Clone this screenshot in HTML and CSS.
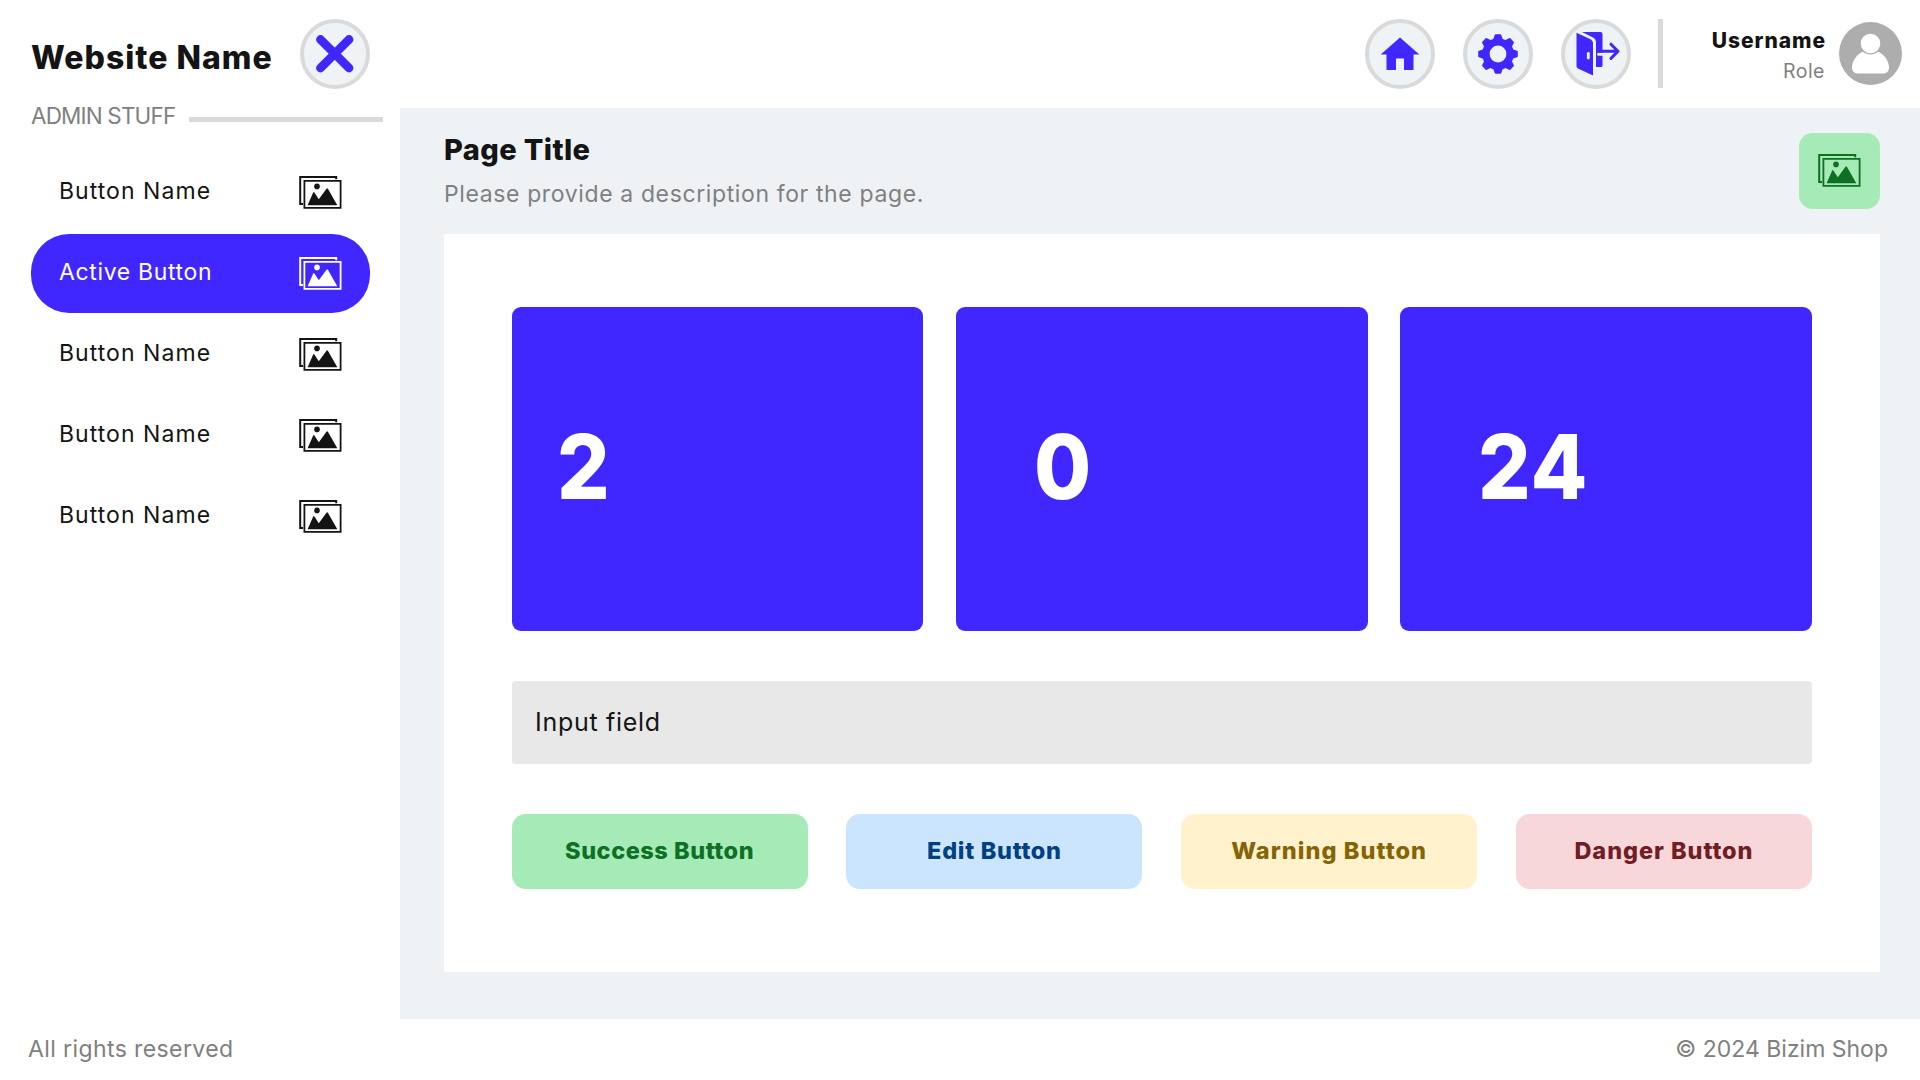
FILE: index.html
```html
<!DOCTYPE html>
<html lang="en">
<head>
<meta charset="utf-8">
<title>Admin panel</title>
<link rel="stylesheet" href="styles.css">
</head>
<body>
<svg class="sprite" aria-hidden="true">
  <symbol id="icon-image" viewBox="0 0 44 35">
    <path d="M38.2 4.3V2H2.2v27.1H5" fill="none" stroke="currentColor" stroke-width="2"/>
    <path d="M6.4 5.9h36.2v27H6.4z" fill="none" stroke="currentColor" stroke-width="1.8"/>
    <circle cx="19" cy="11.4" r="2.8" fill="currentColor"/>
    <path d="M9.6 30.2 15.2 17.5Q15.8 16.6 16.4 17.5L20.8 24.3 28.5 13.7Q29.2 12.9 29.9 13.8L39.3 30.2Z" fill="currentColor"/>
  </symbol>
</svg>
<div class="app">
  <aside class="sidebar">
    <div class="brand">
      <h1 class="brand-name">Website Name</h1>
      <button class="circle" aria-label="Close menu">
        <svg class="glyph" viewBox="0 0 70 70"><path d="M20.500 20.500 49 49M49 20.500 20.500 49" fill="none" stroke="currentColor" stroke-width="8.800" stroke-linecap="round"/></svg>
      </button>
    </div>
    <div class="section"><span class="section-label">ADMIN STUFF</span><span class="section-rule"></span></div>
    <nav class="nav">
      <a class="nav-item"><span class="nav-label">Button Name</span><svg class="image-icon"><use href="#icon-image"/></svg></a>
      <a class="nav-item active"><span class="nav-label">Active Button</span><svg class="image-icon"><use href="#icon-image"/></svg></a>
      <a class="nav-item"><span class="nav-label">Button Name</span><svg class="image-icon"><use href="#icon-image"/></svg></a>
      <a class="nav-item"><span class="nav-label">Button Name</span><svg class="image-icon"><use href="#icon-image"/></svg></a>
      <a class="nav-item"><span class="nav-label">Button Name</span><svg class="image-icon"><use href="#icon-image"/></svg></a>
    </nav>
  </aside>
  <div class="column">
    <header class="topbar">
      <div class="actions">
        <button class="circle" aria-label="Home">
          <svg class="glyph" viewBox="0 0 70 70"><path d="M35 18.5 54.3 35.6H48.5V51H39V39.5H31V51H21.5V35.6H15.7Z" fill="currentColor"/></svg>
        </button>
        <button class="circle" aria-label="Settings">
          <svg class="glyph" viewBox="-35 -35 70 70" fill="currentColor">
            <circle r="12.1" fill="none" stroke="currentColor" stroke-width="7.4"/>
            <g id="teeth"><path id="tooth" d="M-5-14-3.3-19Q-3.1-19.8-2.3-19.8H2.3Q3.1-19.8 3.3-19L5-14Z"/><use href="#tooth" transform="rotate(45)"/><use href="#tooth" transform="rotate(90)"/><use href="#tooth" transform="rotate(135)"/></g>
            <use href="#teeth" transform="rotate(180)"/>
          </svg>
        </button>
        <button class="circle" aria-label="Log out">
          <svg class="glyph" viewBox="0 0 70 70">
            <path d="M21 13H39.500Q41.500 13 41.500 15V46.500Q41.500 48 40 48H35V23.500Q35 20 32 18.500Z" fill="currentColor"/>
            <path d="M15.500 13.700 29 20Q32 21.500 32 24.500V56.500L17 49.500Q15.500 48.700 15.500 47Z" fill="currentColor"/>
            <path d="M27.300 34.300V39" class="cut" stroke-width="2.800"/>
            <path d="M37.500 35.200H42" class="cut" stroke-width="3"/>
            <path d="M38.500 32.300H56M50 25.200 57 32.300 50 39.400" fill="none" stroke="currentColor" stroke-width="3" stroke-linecap="round" stroke-linejoin="round"/>
          </svg>
        </button>
      </div>
      <span class="divider"></span>
      <div class="user">
        <div class="user-text"><span class="user-name">Username</span><span class="user-role">Role</span></div>
        <svg class="avatar" viewBox="0 0 63 63">
          <circle cx="31.500" cy="31.500" r="31.500" fill="#adadad"/>
          <path d="M23 30H40C46 33.500 50 39.500 50 45.500Q50 51.500 43.500 51.500H19.500Q13 51.500 13 45.500C13 39.500 17 33.500 23 30Z" fill="#fff"/>
          <circle cx="31.500" cy="21.500" r="10.400" fill="#fff" stroke="#adadad" stroke-width="1.200"/>
        </svg>
      </div>
    </header>
    <main class="content">
      <div class="page-head">
        <div class="page-text"><h2 class="page-title">Page Title</h2><p class="page-desc">Please provide a description for the page.</p></div>
        <button class="image-button" aria-label="Gallery"><svg class="image-icon"><use href="#icon-image"/></svg></button>
      </div>
      <section class="panel">
        <div class="tiles">
          <div class="tile first"><span class="count">2</span></div>
          <div class="tile"><span class="count">0</span></div>
          <div class="tile"><span class="count">24</span></div>
        </div>
        <div class="field">Input field</div>
        <div class="buttons">
          <button class="btn success">Success Button</button>
          <button class="btn edit">Edit Button</button>
          <button class="btn warning">Warning Button</button>
          <button class="btn danger">Danger Button</button>
        </div>
      </section>
    </main>
  </div>
</div>
<footer class="footer"><span class="rights">All rights reserved</span><span>© 2024 Bizim Shop</span></footer>
</body>
</html>
```
FILE: styles.css
```css
* { box-sizing: border-box; }
body {
  margin: 0;
  height: 1080px;
  display: flex;
  flex-direction: column;
  background: #fff;
  color: #141414;
  font-family: "Inter", "Open Sans", sans-serif;
  font-size: 23px;
}
h1, h2, p { margin: 0; }
button { border: 0; padding: 0; font: inherit; }
.sprite { display: none; }
.app { height: 1019px; display: grid; grid-template-columns: 400px 1fr; }

.sidebar { display: flex; flex-direction: column; }
.brand { height: 108px; padding: 0 30px 1px 31px; display: flex; align-items: center; justify-content: space-between; }
.brand-name { font-size: 32px; line-height: 36px; font-weight: 800; letter-spacing: 1px; padding-top: 8px; white-space: nowrap; }
.circle {
  width: 70px; height: 70px; border-radius: 50%;
  border: 4px solid #dadada; background: #eff3f6; color: #4026ff;
  display: grid; place-items: center;
}
.glyph { width: 70px; height: 70px; margin: -4px; }
.cut { stroke: #eff3f6; stroke-linecap: round; fill: none; }
.section { height: 44.800px; padding: 0 17px 0 31px; display: flex; gap: 14px; }
.section-label { color: #808080; font-size: 22.500px; line-height: 16px; letter-spacing: -0.850px; width: 144px; white-space: nowrap; }
.section-rule { flex: 1; height: 4.500px; margin-top: 9px; background: #dadada; }
.nav { padding: 0 30px 0 31px; display: flex; flex-direction: column; gap: 1.500px; }
.nav-item { height: 79.500px; padding: 0 28.500px 0 28px; display: flex; align-items: center; justify-content: space-between; border-radius: 38px; }
.nav-label { padding-bottom: 3px; letter-spacing: 1.050px; }
.nav-item.active { background: #4026ff; color: #fff; }
.active .nav-label { letter-spacing: 0.650px; }
.image-icon { width: 44px; height: 35px; }

.column { display: flex; flex-direction: column; }
.topbar { height: 108px; padding: 0 18px 1px 0; display: flex; align-items: center; justify-content: flex-end; }
.actions { display: flex; gap: 28px; }
.divider { width: 4.500px; height: 69px; margin-left: 27.300px; background: #dadada; }
.user { display: flex; align-items: center; gap: 14px; margin-left: 43.500px; }
.user-text { width: 119px; padding-top: 5px; display: flex; flex-direction: column; align-items: flex-end; }
.user-name { font-size: 21px; line-height: 30px; font-weight: 800; letter-spacing: 0.950px; margin-right: -1px; }
.user-role { font-size: 19.500px; line-height: 30px; letter-spacing: 0.500px; color: #808080; }
.avatar { width: 63px; height: 63px; }

.content { flex: 1; background: #eef2f5; padding: 25px 40px 47px 44px; display: flex; flex-direction: column; }
.page-head { height: 100.500px; display: flex; justify-content: space-between; }
.page-title { font-size: 29px; line-height: 34px; font-weight: 800; letter-spacing: 0.400px; }
.page-desc { color: #808080; line-height: 30px; padding-top: 12px; letter-spacing: 0.620px; }
.image-button { width: 81px; height: 76px; padding: 0 1px 1px 0; border-radius: 14px; background: #a5eab7; color: #0d7023; display: grid; place-items: center; }
.panel { flex: 1; background: #fff; padding: 73.500px 68px 0 67.600px; display: flex; flex-direction: column; }
.tiles { display: grid; grid-template-columns: repeat(3, 1fr); gap: 32.500px; height: 323.500px; }
.tile { background: #4026ff; color: #fff; border-radius: 9px; padding: 0 0 5px 78px; display: flex; align-items: center; font-size: 89px; font-weight: 800; letter-spacing: 1px; }
.tile.first { padding-left: 45px; }
.count { transform: scaleX(0.93); transform-origin: left; }
.field { height: 83px; margin-top: 50px; padding-left: 23.500px; border-radius: 4px; background: #e8e8e8; display: flex; align-items: center; font-size: 25px; letter-spacing: 0.700px; }
.buttons { display: grid; grid-template-columns: repeat(4, 1fr); gap: 38.700px; margin-top: 50px; }
.btn { height: 75px; padding-bottom: 2px; border-radius: 14px; font-size: 23.500px; font-weight: 800; white-space: nowrap; }
.success { background: #a5eab7; color: #0d7023; letter-spacing: 0.550px; }
.edit { background: #cce5ff; color: #004085; letter-spacing: 0.700px; }
.warning { background: #fff2cd; color: #856404; letter-spacing: 1.080px; }
.danger { background: #f7d7da; color: #721c24; letter-spacing: 0.950px; }
.footer { flex: 1; padding: 0 32px 2px 28px; display: flex; align-items: center; justify-content: space-between; color: #808080; }
.rights { letter-spacing: 0.400px; }
```
